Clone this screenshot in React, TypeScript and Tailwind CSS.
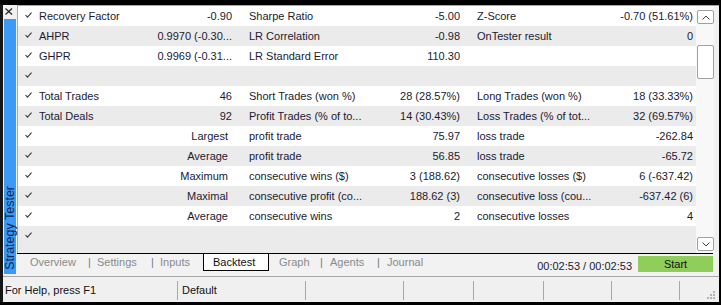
import React from "react";

type Row = { l?: string; v?: string; r?: string; l2?: string; v2?: string; l3?: string; v3?: string };

const rows: Row[] = [
  { l: "Recovery Factor", v: "-0.90", l2: "Sharpe Ratio", v2: "-5.00", l3: "Z-Score", v3: "-0.70 (51.61%)" },
  { l: "AHPR", v: "0.9970 (-0.30...", l2: "LR Correlation", v2: "-0.98", l3: "OnTester result", v3: "0" },
  { l: "GHPR", v: "0.9969 (-0.31...", l2: "LR Standard Error", v2: "110.30" },
  {},
  { l: "Total Trades", v: "46", l2: "Short Trades (won %)", v2: "28 (28.57%)", l3: "Long Trades (won %)", v3: "18 (33.33%)" },
  { l: "Total Deals", v: "92", l2: "Profit Trades (% of to...", v2: "14 (30.43%)", l3: "Loss Trades (% of tot...", v3: "32 (69.57%)" },
  { r: "Largest", l2: "profit trade", v2: "75.97", l3: "loss trade", v3: "-262.84" },
  { r: "Average", l2: "profit trade", v2: "56.85", l3: "loss trade", v3: "-65.72" },
  { r: "Maximum", l2: "consecutive wins ($)", v2: "3 (188.62)", l3: "consecutive losses ($)", v3: "6 (-637.42)" },
  { r: "Maximal", l2: "consecutive profit (co...", v2: "188.62 (3)", l3: "consecutive loss (cou...", v3: "-637.42 (6)" },
  { r: "Average", l2: "consecutive wins", v2: "2", l3: "consecutive losses", v3: "4" },
];

function Check() {
  return (
    <svg width="7" height="6" viewBox="0 0 7 6" className="block">
      <polyline points="0.5,3 2.5,5.2 6.5,0.6" fill="none" stroke="#3a3a3a" strokeWidth="1.1" />
    </svg>
  );
}

function DataRow({ row, gray, tall }: { row: Row; gray: boolean; tall?: boolean }) {
  return (
    <div className={`flex items-start ${tall ? "h-[27px]" : "h-[20px]"} ${gray ? "bg-[#ebebeb]" : "bg-white"}`}>
      <div className="w-[21px] h-[20px] flex items-center pl-[7px] pb-[2px]">
        <Check />
      </div>
      <div className="w-[193px] h-[20px] pt-[1px] flex items-center justify-between">
        {row.r ? (
          <span className="ml-auto pr-[4px]">{row.r}</span>
        ) : (
          <>
            <span>{row.l}</span>
            <span>{row.v}</span>
          </>
        )}
      </div>
      <div className="w-[17px]" />
      <div className="w-[211px] h-[20px] pt-[1px] flex items-center justify-between">
        <span>{row.l2}</span>
        <span>{row.v2}</span>
      </div>
      <div className="w-[17px]" />
      <div className="w-[216px] h-[20px] pt-[1px] flex items-center justify-between">
        <span>{row.l3}</span>
        <span>{row.v3}</span>
      </div>
    </div>
  );
}

function Chevron({ up }: { up?: boolean }) {
  return (
    <svg width="8" height="5" viewBox="0 0 8 5">
      <polyline
        points={up ? "0.5,4.5 4,1 7.5,4.5" : "0.5,0.5 4,4 7.5,0.5"}
        fill="none"
        stroke="#444"
        strokeWidth="1"
      />
    </svg>
  );
}

export default function App() {
  return (
    <div className="w-[721px] h-[305px] bg-black flex flex-col overflow-hidden text-[11px] text-[#1a1a33] font-['Liberation_Sans',Arial,sans-serif] leading-none">
      <div className="h-[5px] shrink-0" />
      <div className="flex h-[271px] shrink-0">
        <div className="w-[3px] bg-[#161616]" />
        {/* left panel */}
        <div className="w-[14px] bg-[#f0f0f0] flex flex-col">
          <div className="h-[14px] flex items-start pl-[2px] pt-[3px]">
            <svg width="8" height="7" viewBox="0 0 8 7">
              <line x1="0.5" y1="0.5" x2="7" y2="6.5" stroke="#222" strokeWidth="1.1" />
              <line x1="7" y1="0.5" x2="0.5" y2="6.5" stroke="#222" strokeWidth="1.1" />
            </svg>
          </div>
          <div className="ml-[1px] w-[12px] h-[255px] bg-[#3a9af5] flex flex-col justify-end items-center pb-[4px]">
            <span className="[writing-mode:vertical-rl] rotate-180 text-[12.5px] text-[#0f2752] whitespace-nowrap leading-none">
              Strategy Tester
            </span>
          </div>
        </div>
        {/* main */}
        <div className="w-[702px] bg-[#f0f0f0] flex flex-col">
          <div className="h-[248px] flex border-l border-t border-[#a8a8a8]">
            <div className="w-[678px] flex flex-col">
              {rows.map((r, i) => (
                <DataRow key={i} row={r} gray={i % 2 === 1} />
              ))}
              <DataRow row={{}} gray tall />
            </div>
            <div className="w-[18px] bg-[#f8f8f8] flex flex-col items-end pt-[4px] pb-[2px]">
              <div className="w-[17px] h-[14px] bg-white border border-[#a0a0a0] rounded-[2px] flex items-center justify-center">
                <Chevron up />
              </div>
              <div className="mt-[21px] w-[17px] h-[34px] bg-white border border-[#a0a0a0] rounded-[2px]" />
              <div className="mt-auto w-[17px] h-[14px] bg-white border border-[#a0a0a0] rounded-[2px] flex items-center justify-center">
                <Chevron />
              </div>
            </div>
            <div className="w-[5px]" />
          </div>
          {/* tab bar */}
          <div className="h-[23px] flex">
            <div className="w-[696px] h-[23px] flex items-start border-t border-black bg-[#f2f2f2]">
              <span className="ml-[13px] w-[58px] h-[17px] flex items-center text-[#8a8a8a]">Overview</span>
              <span className="w-[9px] h-[17px] flex items-center text-[#777]">|</span>
              <span className="w-[54px] h-[17px] flex items-center text-[#8a8a8a]">Settings</span>
              <span className="w-[9px] h-[17px] flex items-center text-[#777]">|</span>
              <span className="w-[43px] h-[17px] flex items-center text-[#8a8a8a]">Inputs</span>
              <span className="w-[66px] h-[17px] flex items-center pl-[9px] bg-white border-l border-r border-b border-black text-[#111]">
                Backtest
              </span>
              <span className="ml-[10px] w-[41px] h-[17px] flex items-center text-[#8a8a8a]">Graph</span>
              <span className="w-[10px] h-[17px] flex items-center text-[#777]">|</span>
              <span className="w-[47px] h-[17px] flex items-center text-[#8a8a8a]">Agents</span>
              <span className="w-[10px] h-[17px] flex items-center text-[#777]">|</span>
              <span className="h-[17px] flex items-center text-[#8a8a8a]">Journal</span>
              <span className="ml-auto mt-[4px] h-[16px] flex items-center text-[#1a1a33]">00:02:53 / 00:02:53</span>
              <div className="ml-[6px] mt-[2px] w-[75px] h-[16px] bg-[#8fce5b] flex items-center justify-center text-[#111]">
                Start
              </div>
            </div>
            <div className="w-[6px]" />
          </div>
        </div>
        <div className="w-[2px] bg-black" />
      </div>
      {/* status bar */}
      <div className="flex h-[26px] shrink-0">
        <div className="w-[3px] bg-[#161616]" />
        <div className="w-[716px] bg-[#f0f0f0] border-t border-[#a8a8a8] flex relative">
          <span className="w-[174px] pl-[2px] pt-[2px] flex items-center text-[#111]">For Help, press F1</span>
          <div className="w-px h-[19px] mt-[4px] bg-[#a8a8a8]" />
          <span className="w-[127px] pl-[4px] pt-[2px] flex items-center text-[#111]">Default</span>
          <div className="w-px h-[19px] mt-[4px] bg-[#a8a8a8]" />
          <div className="w-[97px]" />
          <div className="w-px h-[19px] mt-[4px] bg-[#a8a8a8]" />
          <div className="w-[69px]" />
          <div className="w-px h-[19px] mt-[4px] bg-[#a8a8a8]" />
          <div className="w-[69px]" />
          <div className="w-px h-[19px] mt-[4px] bg-[#a8a8a8]" />
          <div className="w-[67px]" />
          <div className="w-px h-[19px] mt-[4px] bg-[#a8a8a8]" />
          <div className="w-[67px]" />
          <div className="w-px h-[19px] mt-[4px] bg-[#a8a8a8]" />
          <svg width="10" height="10" viewBox="0 0 10 10" className="absolute right-[3px] bottom-[2px]">
            <rect x="7" y="1" width="2" height="2" fill="#b4b4b4" />
            <rect x="4" y="4" width="2" height="2" fill="#b4b4b4" />
            <rect x="7" y="4" width="2" height="2" fill="#b4b4b4" />
            <rect x="1" y="7" width="2" height="2" fill="#b4b4b4" />
            <rect x="4" y="7" width="2" height="2" fill="#b4b4b4" />
            <rect x="7" y="7" width="2" height="2" fill="#b4b4b4" />
          </svg>
        </div>
        <div className="w-[2px] bg-black" />
      </div>
      <div className="flex-1" />
    </div>
  );
}
